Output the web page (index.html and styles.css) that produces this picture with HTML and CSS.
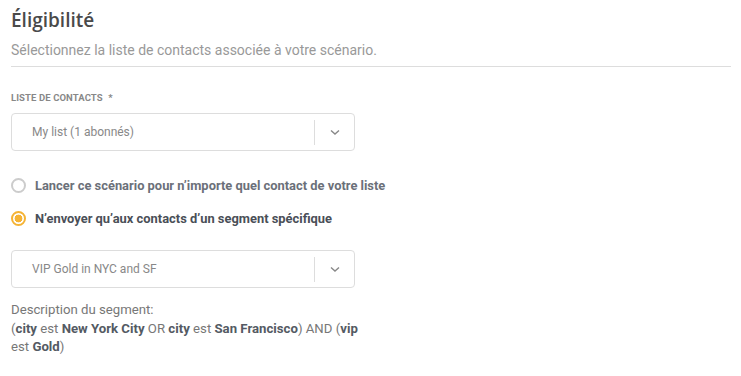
FILE: index.html
```html
<!DOCTYPE html>
<html lang="fr">
<head>
  <meta charset="UTF-8">
  <title>Éligibilité</title>
  <link rel="stylesheet" href="styles.css">
</head>
<body>
  <section class="panel">
    <h1>Éligibilité</h1>
    <p class="intro">Sélectionnez la liste de contacts associée à votre scénario.</p>

    <label class="field-label">Liste de contacts <span class="req">*</span></label>
    <div class="select first">
      <span class="select-value">My list (1 abonnés)</span>
      <span class="select-arrow">
        <svg width="12" height="8" viewBox="0 0 12 8"><path d="M2 2.5l4 3.5 4-3.5" fill="none" stroke="#888" stroke-width="1.4"/></svg>
      </span>
    </div>

    <div class="radios">
      <label class="radio">
        <span class="dot"></span>
        Lancer ce scénario pour n’importe quel contact de votre liste
      </label>
      <label class="radio checked">
        <span class="dot"></span>
        N’envoyer qu’aux contacts d’un segment spécifique
      </label>
    </div>

    <div class="select">
      <span class="select-value">VIP Gold in NYC and SF</span>
      <span class="select-arrow">
        <svg width="12" height="8" viewBox="0 0 12 8"><path d="M2 2.5l4 3.5 4-3.5" fill="none" stroke="#888" stroke-width="1.4"/></svg>
      </span>
    </div>

    <p class="segment-desc">
      Description du segment:<br>
      (<b>city</b> est <b>New York City</b> OR <b>city</b> est <b>San Francisco</b>) AND (<b>vip</b> est <b>Gold</b>)
    </p>
  </section>
</body>
</html>
```

FILE: styles.css
```css
body {
  margin: 0;
  padding: 0 10px 0 11px;
  font-family: Roboto, "Liberation Sans", Arial, sans-serif;
  background: #fff;
  color: #666;
}
.panel {
  max-width: 720px;
}
h1 {
  font-family: "Open Sans", "Noto Sans", sans-serif;
  font-weight: 600;
  font-size: 19px;
  color: #4a4a4a;
  margin: 6px 0 0;
  line-height: 28px;
}
.intro {
  font-size: 14px;
  color: #999;
  margin: 7px 0 0;
  padding-bottom: 7px;
  border-bottom: 1px solid #ddd;
  line-height: 18px;
}
.field-label {
  display: block;
  margin-top: 25px;
  font-size: 9.5px;
  font-weight: 700;
  text-transform: uppercase;
  color: #888;
  letter-spacing: 0.1px;
}
.req {
  margin-left: 3px;
}
.select {
  display: flex;
  align-items: center;
  width: 342px;
  height: 36px;
  border: 1px solid #ddd;
  border-radius: 4px;
}
.select.first {
  margin-top: 10px;
}
.select-value {
  flex: 1;
  padding-left: 20px;
  font-size: 12px;
  color: #888;
}
.select-arrow {
  display: flex;
  align-items: center;
  justify-content: center;
  width: 39px;
  height: 25px;
  border-left: 1px solid #ddd;
}
.radios {
  margin: 26px 0 23px;
  display: flex;
  flex-direction: column;
  gap: 16px;
}
.radio {
  display: flex;
  align-items: center;
  gap: 9px;
  font-size: 12.9px;
  font-weight: 700;
  color: #6b7079;
  line-height: 17px;
}
.radio.checked {
  color: #4a4f57;
}
.dot {
  box-sizing: border-box;
  width: 15px;
  height: 15px;
  border-radius: 50%;
  border: 2px solid #ccc;
  flex-shrink: 0;
}
.radio.checked .dot {
  border-color: #f5b335;
  background: radial-gradient(circle, #f5b335 0 3.6px, #fff 4.2px);
}
.segment-desc {
  width: 352px;
  margin: 13px 0 0;
  font-size: 13.2px;
  line-height: 18.5px;
  color: #777;
}
.segment-desc b {
  color: #545a63;
}
```
